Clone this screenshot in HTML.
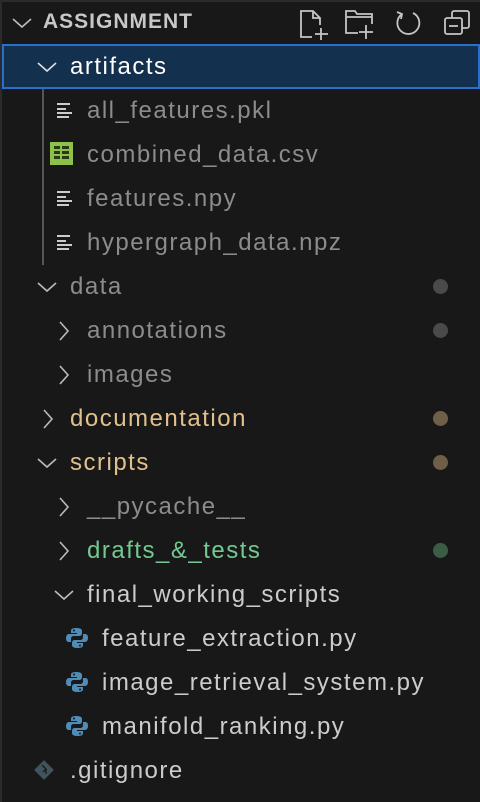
<!DOCTYPE html>
<html><head><meta charset="utf-8">
<style>
*{margin:0;padding:0;box-sizing:border-box}
html,body{width:480px;height:802px;background:#181818;overflow:hidden}
body{position:relative;font-family:"Liberation Sans",Arial,sans-serif;}
.edge{position:absolute;left:0;top:0;width:2px;height:802px;background:#2b2b2b}
.topl{position:absolute;left:0;top:0;width:480px;height:2px;background:#2b2b2b}
.row{position:absolute;left:2px;width:478px;height:44px;}
.t{position:absolute;top:0;line-height:44px;font-size:24px;letter-spacing:1.5px;white-space:nowrap;color:#cccccc}
.dim{color:#8c8c8c}
.fold{color:#e2c08d}
.grn{color:#73c991}
.ic{position:absolute}
.dot{position:absolute;left:433px;top:14px;width:15px;height:15px;border-radius:50%}
.sel{background:#14304f;border:2px solid #2b6fce}
.guide{position:absolute;left:42px;top:89px;width:2px;height:176px;background:#555}
</style></head><body>
<div class="topl"></div><div class="edge"></div>

<svg class="ic" style="left:11px;top:16px" width="22" height="14" viewBox="0 0 22 14"><path d="M2 3 L11 11 L20 3" fill="none" stroke="#bbb" stroke-width="1.6"/></svg>
<div class="t" style="left:43px;top:0;line-height:44px;font-weight:bold;font-size:21px;letter-spacing:1px;color:#c8c8c8">ASSIGNMENT</div>
<svg class="ic" style="left:298px;top:8px" width="34" height="32" viewBox="0 0 34 32" fill="none" stroke="#c5c5c5" stroke-width="1.8">
<path d="M14 29 H3 V3 H15 L22 10 V17"/><path d="M15 3 V10 H22"/><path d="M23 20 V32 M17 26 H30"/></svg>
<svg class="ic" style="left:344px;top:8px" width="34" height="32" viewBox="0 0 34 32" fill="none" stroke="#c5c5c5" stroke-width="1.8">
<path d="M14 25 H2 V3 H11 L13 6 H28 V16"/><path d="M2 9 H28"/><path d="M22 17 V31 M15 24 H29"/></svg>
<svg class="ic" style="left:393px;top:9px" width="30" height="30" viewBox="0 0 30 30" fill="none" stroke="#c5c5c5" stroke-width="1.8">
<path d="M9 5 A11 11 0 1 0 20 4"/><path d="M4 3 L9 5 L8 10"/></svg>
<svg class="ic" style="left:443px;top:9px" width="28" height="28" viewBox="0 0 28 28" fill="none" stroke="#c5c5c5" stroke-width="1.8">
<rect x="2" y="9" width="17" height="16" rx="2"/><path d="M9 9 V4 a2 2 0 0 1 2-2 h13 a2 2 0 0 1 2 2 v13 a2 2 0 0 1-2 2 h-5"/><path d="M6 17 H15"/></svg>

<div class="row sel" style="top:44px;height:45px"></div>
<svg class="ic" style="left:36px;top:60px" width="22" height="14" viewBox="0 0 22 14"><path d="M2 3 L11 11 L20 3" fill="none" stroke="#ddd" stroke-width="1.6"/></svg>
<div class="t" style="left:70px;top:45px;color:#fff">artifacts</div>
<div class="guide"></div>

<svg class="ic" style="left:57px;top:102px" width="18" height="18" viewBox="0 0 18 18" fill="#ccc"><rect x="0" y="1" width="13" height="2"/><rect x="0" y="6" width="9" height="2"/><rect x="0" y="10" width="15" height="2"/><rect x="0" y="14" width="12" height="2"/></svg>
<div class="t dim" style="left:87px;top:89px">all_features.pkl</div>

<svg class="ic" style="left:50px;top:142px" width="23" height="23" viewBox="0 0 23 23"><rect x="0" y="0" width="23" height="23" fill="#8dc149"/><g fill="#2a3a16"><rect x="4" y="4" width="6" height="3"/><rect x="12" y="4" width="7" height="3"/><rect x="4" y="9" width="6" height="3"/><rect x="12" y="9" width="7" height="3"/><rect x="4" y="14" width="6" height="3"/><rect x="12" y="14" width="7" height="3"/></g></svg>
<div class="t dim" style="left:87px;top:133px">combined_data.csv</div>

<svg class="ic" style="left:57px;top:190px" width="18" height="18" viewBox="0 0 18 18" fill="#ccc"><rect x="0" y="1" width="13" height="2"/><rect x="0" y="6" width="9" height="2"/><rect x="0" y="10" width="15" height="2"/><rect x="0" y="14" width="12" height="2"/></svg>
<div class="t dim" style="left:87px;top:177px">features.npy</div>

<svg class="ic" style="left:57px;top:234px" width="18" height="18" viewBox="0 0 18 18" fill="#ccc"><rect x="0" y="1" width="13" height="2"/><rect x="0" y="6" width="9" height="2"/><rect x="0" y="10" width="15" height="2"/><rect x="0" y="14" width="12" height="2"/></svg>
<div class="t dim" style="left:87px;top:221px">hypergraph_data.npz</div>

<svg class="ic" style="left:36px;top:280px" width="22" height="14" viewBox="0 0 22 14"><path d="M2 3 L11 11 L20 3" fill="none" stroke="#bbb" stroke-width="1.6"/></svg>
<div class="t dim" style="left:70px;top:265px">data</div>
<div class="dot" style="top:279px;background:#4a4a4a"></div>

<svg class="ic" style="left:57px;top:320px" width="14" height="22" viewBox="0 0 14 22"><path d="M3 2 L11 11 L3 20" fill="none" stroke="#bbb" stroke-width="1.6"/></svg>
<div class="t dim" style="left:87px;top:309px">annotations</div>
<div class="dot" style="top:323px;background:#4a4a4a"></div>

<svg class="ic" style="left:57px;top:364px" width="14" height="22" viewBox="0 0 14 22"><path d="M3 2 L11 11 L3 20" fill="none" stroke="#bbb" stroke-width="1.6"/></svg>
<div class="t dim" style="left:87px;top:353px">images</div>

<svg class="ic" style="left:41px;top:408px" width="14" height="22" viewBox="0 0 14 22"><path d="M3 2 L11 11 L3 20" fill="none" stroke="#bbb" stroke-width="1.6"/></svg>
<div class="t fold" style="left:70px;top:397px">documentation</div>
<div class="dot" style="top:411px;background:#6e5f48"></div>

<svg class="ic" style="left:36px;top:456px" width="22" height="14" viewBox="0 0 22 14"><path d="M2 3 L11 11 L20 3" fill="none" stroke="#bbb" stroke-width="1.6"/></svg>
<div class="t fold" style="left:70px;top:441px">scripts</div>
<div class="dot" style="top:455px;background:#6e5f48"></div>

<svg class="ic" style="left:57px;top:496px" width="14" height="22" viewBox="0 0 14 22"><path d="M3 2 L11 11 L3 20" fill="none" stroke="#bbb" stroke-width="1.6"/></svg>
<div class="t dim" style="left:87px;top:485px">__pycache__</div>

<svg class="ic" style="left:57px;top:540px" width="14" height="22" viewBox="0 0 14 22"><path d="M3 2 L11 11 L3 20" fill="none" stroke="#bbb" stroke-width="1.6"/></svg>
<div class="t grn" style="left:87px;top:529px">drafts_&amp;_tests</div>
<div class="dot" style="top:543px;background:#3c5d45"></div>

<svg class="ic" style="left:53px;top:588px" width="22" height="14" viewBox="0 0 22 14"><path d="M2 3 L11 11 L20 3" fill="none" stroke="#bbb" stroke-width="1.6"/></svg>
<div class="t" style="left:87px;top:573px">final_working_scripts</div>

<svg class="ic" style="left:66px;top:627px" width="22" height="22" viewBox="0 0 22 22" fill="#4f8cb8"><path d="M10 1 C5 1 5 3 5 4 V6 H11 V7 H3 C1 7 0 9 0 11 C0 14 1 15 3 15 H5 V12 C5 10 6 9 8 9 H13 C15 9 16 8 16 6 V4 C16 2 14 1 10 1Z"/><path d="M12 21 C17 21 17 19 17 18 V16 H11 V15 H19 C21 15 22 13 22 11 C22 8 21 7 19 7 H17 V10 C17 12 16 13 14 13 H9 C7 13 6 14 6 16 V18 C6 20 8 21 12 21Z"/><circle cx="8" cy="3.5" r="1" fill="#181818"/><circle cx="14" cy="18.5" r="1" fill="#181818"/></svg>
<div class="t" style="left:102px;top:617px">feature_extraction.py</div>

<svg class="ic" style="left:66px;top:671px" width="22" height="22" viewBox="0 0 22 22" fill="#4f8cb8"><path d="M10 1 C5 1 5 3 5 4 V6 H11 V7 H3 C1 7 0 9 0 11 C0 14 1 15 3 15 H5 V12 C5 10 6 9 8 9 H13 C15 9 16 8 16 6 V4 C16 2 14 1 10 1Z"/><path d="M12 21 C17 21 17 19 17 18 V16 H11 V15 H19 C21 15 22 13 22 11 C22 8 21 7 19 7 H17 V10 C17 12 16 13 14 13 H9 C7 13 6 14 6 16 V18 C6 20 8 21 12 21Z"/><circle cx="8" cy="3.5" r="1" fill="#181818"/><circle cx="14" cy="18.5" r="1" fill="#181818"/></svg>
<div class="t" style="left:102px;top:661px">image_retrieval_system.py</div>

<svg class="ic" style="left:66px;top:715px" width="22" height="22" viewBox="0 0 22 22" fill="#4f8cb8"><path d="M10 1 C5 1 5 3 5 4 V6 H11 V7 H3 C1 7 0 9 0 11 C0 14 1 15 3 15 H5 V12 C5 10 6 9 8 9 H13 C15 9 16 8 16 6 V4 C16 2 14 1 10 1Z"/><path d="M12 21 C17 21 17 19 17 18 V16 H11 V15 H19 C21 15 22 13 22 11 C22 8 21 7 19 7 H17 V10 C17 12 16 13 14 13 H9 C7 13 6 14 6 16 V18 C6 20 8 21 12 21Z"/><circle cx="8" cy="3.5" r="1" fill="#181818"/><circle cx="14" cy="18.5" r="1" fill="#181818"/></svg>
<div class="t" style="left:102px;top:705px">manifold_ranking.py</div>

<svg class="ic" style="left:33px;top:759px" width="22" height="22" viewBox="0 0 22 22"><rect x="4" y="4" width="14" height="14" transform="rotate(45 11 11)" fill="#41535b"/><path d="M9 6 L13 10 V15 M13 10 L10 13" stroke="#181818" stroke-width="1.3" fill="none"/></svg>
<div class="t" style="left:70px;top:749px">.gitignore</div>
</body></html>
